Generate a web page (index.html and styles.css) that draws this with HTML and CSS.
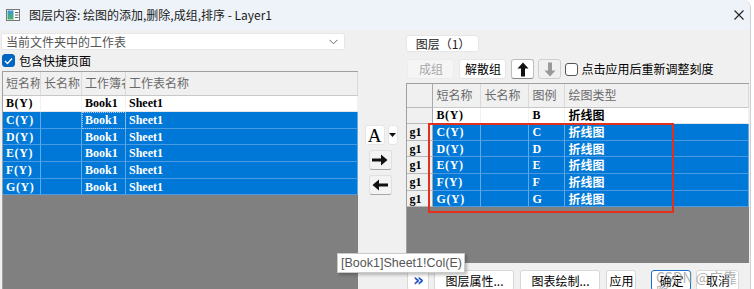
FILE: index.html
```html
<!DOCTYPE html>
<html lang="zh">
<head>
  <meta charset="UTF-8" />
  <title>图层内容</title>
  <link rel="stylesheet" href="styles.css">
</head>
<body>
  <div class="window">
    <div class="titlebar">
      <svg class="appicon" width="14" height="12" viewBox="0 0 14 12">
        <defs>
          <linearGradient id="g" x1="0" y1="0" x2="0" y2="1">
            <stop offset="0" stop-color="#3a9ad0"/>
            <stop offset="1" stop-color="#4caf6a"/>
          </linearGradient>
        </defs>
        <rect x="0.5" y="0.5" width="13" height="11" fill="#fff" stroke="#777"/>
        <rect x="1.5" y="1.5" width="6" height="9" fill="url(#g)"/>
        <line x1="9" y1="3.5" x2="12.5" y2="3.5" stroke="#666"/>
        <line x1="9" y1="6" x2="12.5" y2="6" stroke="#666"/>
        <line x1="9" y1="8.5" x2="12.5" y2="8.5" stroke="#666"/>
      </svg>
      <span class="title">图层内容: 绘图的添加,删除,成组,排序 - Layer1</span>
      <svg class="close" width="10" height="10" viewBox="0 0 10 10">
        <path d="M0.5 0.5 L9.5 9.5 M9.5 0.5 L0.5 9.5" stroke="#222" stroke-width="1.1"/>
      </svg>
    </div>

    <div class="main">
      <div class="left">
        <div class="combo">
          <span>当前文件夹中的工作表</span>
          <svg width="9" height="6" viewBox="0 0 9 6"><path d="M0.5 0.8 L4.5 4.8 L8.5 0.8" fill="none" stroke="#666" stroke-width="1"/></svg>
        </div>
        <div class="check-row">
          <span class="box checked">
            <svg width="9" height="8" viewBox="0 0 9 8"><path d="M1 4 L3.5 6.5 L8 1.5" fill="none" stroke="#fff" stroke-width="1.3"/></svg>
          </span>
          <span>包含快捷页面</span>
        </div>
        <div class="grid lgrid">
          <div class="lrow head">
            <div class="cell">短名称</div>
            <div class="cell">长名称</div>
            <div class="cell">工作簿名称</div>
            <div class="cell">工作表名称</div>
          </div>
          <div class="lrow plain">
            <div class="cell name">B(Y)</div><div class="cell"></div><div class="cell">Book1</div><div class="cell">Sheet1</div>
          </div>
          <div class="lrow sel">
            <div class="cell name">C(Y)</div><div class="cell"></div><div class="cell focus">Book1</div><div class="cell">Sheet1</div>
          </div>
          <div class="lrow sel">
            <div class="cell name">D(Y)</div><div class="cell"></div><div class="cell">Book1</div><div class="cell">Sheet1</div>
          </div>
          <div class="lrow sel">
            <div class="cell name">E(Y)</div><div class="cell"></div><div class="cell">Book1</div><div class="cell">Sheet1</div>
          </div>
          <div class="lrow sel">
            <div class="cell name">F(Y)</div><div class="cell"></div><div class="cell">Book1</div><div class="cell">Sheet1</div>
          </div>
          <div class="lrow sel">
            <div class="cell name">G(Y)</div><div class="cell"></div><div class="cell">Book1</div><div class="cell">Sheet1</div>
          </div>
        </div>
      </div>

      <div class="mid">
        <div class="a-row">
          <div class="btn a-btn">A</div>
          <div class="btn drop-btn">
            <svg width="7" height="4" viewBox="0 0 7 4"><path d="M0 0 H7 L3.5 4 Z" fill="#111"/></svg>
          </div>
        </div>
        <div class="btn arrow-btn">
          <svg width="16" height="12" viewBox="0 0 16 12"><path d="M0 4.5 H9 V0.5 L15.5 6 L9 11.5 V7.5 H0 Z" fill="#111"/></svg>
        </div>
        <div class="btn arrow-btn">
          <svg width="16" height="12" viewBox="0 0 16 12"><path d="M16 4.5 H7 V0.5 L0.5 6 L7 11.5 V7.5 H16 Z" fill="#111"/></svg>
        </div>
      </div>

      <div class="right">
        <div class="tab">图层（1）</div>
        <div class="toolbar">
          <div class="btn tbtn disabled">成组</div>
          <div class="btn tbtn">解散组</div>
          <div class="btn updown">
            <svg width="12" height="15" viewBox="0 0 12 15"><path d="M6 0.5 L11.5 6.5 H8 V14.5 H4 V6.5 H0.5 Z" fill="#111"/></svg>
          </div>
          <div class="btn updown off">
            <svg width="12" height="15" viewBox="0 0 12 15"><path d="M6 14.5 L11.5 8.5 H8 V0.5 H4 V8.5 H0.5 Z" fill="#9a9a9a"/></svg>
          </div>
          <span class="box"></span>
          <span class="check-text">点击应用后重新调整刻度</span>
        </div>
        <div class="grid rgrid">
          <div class="rrow head">
            <div class="cell rh"></div>
            <div class="cell">短名称</div>
            <div class="cell">长名称</div>
            <div class="cell">图例</div>
            <div class="cell">绘图类型</div>
          </div>
          <div class="rrow plain">
            <div class="cell rh"></div><div class="cell name">B(Y)</div><div class="cell"></div><div class="cell">B</div><div class="cell cjk">折线图</div>
          </div>
          <div class="rrow sel">
            <div class="cell rh">g1</div><div class="cell name">C(Y)</div><div class="cell"></div><div class="cell">C</div><div class="cell cjk">折线图</div>
          </div>
          <div class="rrow sel">
            <div class="cell rh">g1</div><div class="cell name">D(Y)</div><div class="cell"></div><div class="cell">D</div><div class="cell cjk">折线图</div>
          </div>
          <div class="rrow sel">
            <div class="cell rh">g1</div><div class="cell name">E(Y)</div><div class="cell"></div><div class="cell">E</div><div class="cell cjk">折线图</div>
          </div>
          <div class="rrow sel">
            <div class="cell rh">g1</div><div class="cell name">F(Y)</div><div class="cell"></div><div class="cell">F</div><div class="cell cjk">折线图</div>
          </div>
          <div class="rrow sel">
            <div class="cell rh">g1</div><div class="cell name">G(Y)</div><div class="cell"></div><div class="cell">G</div><div class="cell cjk">折线图</div>
          </div>
          <div class="mark"></div>
        </div>
        <div class="actions">
          <div class="btn abtn more">»</div>
          <div class="btn abtn wide">图层属性...</div>
          <div class="btn abtn wide">图表绘制...</div>
          <div class="btn abtn apply">应用</div>
          <div class="btn abtn ok">确定</div>
          <div class="btn abtn cancel">取消</div>
        </div>
      </div>
    </div>

    <div class="tooltip">[Book1]Sheet1!Col(E)</div>
    <div class="watermark">CSDN @广靠隆</div>
  </div>
</body>
</html>
```

FILE: styles.css
```css
* {
  box-sizing: border-box;
}
html, body {
  margin: 0;
}
body {
  width: 754px;
  height: 289px;
  overflow: hidden;
  background: #fff;
  font-family: "Noto Sans CJK SC", sans-serif;
  font-size: 12px;
  color: #000;
}
.window {
  position: relative;
  width: 751px;
  height: 289px;
  background: #f0f0f0;
  border-top-right-radius: 8px;
  border-right: 1px solid #cfcfcf;
  overflow: hidden;
}
.titlebar {
  height: 30px;
  background: #eef3f9;
  display: flex;
  align-items: center;
  padding-left: 6px;
}
.title {
  margin-left: 9px;
  color: #1a1a1a;
  line-height: 1;
}
.close {
  margin-left: auto;
  margin-right: 6px;
}
.main {
  display: flex;
  height: 259px;
}

/* left panel */
.left {
  width: 358px;
  padding: 3px 0 0 1px;
  display: flex;
  flex-direction: column;
}
.combo {
  width: 344px;
  height: 17px;
  background: #fff;
  border: 1px solid #e6e6e6;
  border-radius: 2px;
  display: flex;
  align-items: center;
  justify-content: space-between;
  padding: 0 6px 0 4px;
  color: #555;
  line-height: 1;
}
.check-row {
  margin: 3px 0 0 1px;
  height: 15px;
  display: flex;
  align-items: center;
  gap: 4px;
  line-height: 1;
}
.box {
  width: 13px;
  height: 13px;
  border: 1px solid #555;
  border-radius: 3px;
  background: #fff;
  display: flex;
  align-items: center;
  justify-content: center;
  flex: none;
}
.box.checked {
  background: #0067c0;
  border-color: #0067c0;
}

/* grids */
.grid {
  background: #808080;
  overflow: hidden;
}
.lgrid {
  margin: 3px 0 0 1px;
  flex: 1;
  border-top: 1px solid #a0a0a0;
  border-left: 1px solid #a0a0a0;
}
.lrow, .rrow {
  display: grid;
  height: 16.67px;
}
.lrow {
  grid-template-columns: 38px 41px 44px 1fr;
}
.rrow {
  grid-template-columns: 26px 48px 48px 36px 1fr;
}
.lrow.head, .rrow.head {
  height: 23.5px;
}
.cell {
  overflow: hidden;
  white-space: nowrap;
  padding-left: 3px;
  display: flex;
  align-items: center;
  font-family: "Liberation Serif", "Noto Sans CJK SC", serif;
  font-weight: bold;
  font-size: 12px;
  line-height: 1;
}
.cell.name {
  letter-spacing: 0.6px;
}
.cell.cjk {
  font-family: "Noto Sans CJK SC", sans-serif;
  font-size: 12px;
}
.head .cell {
  background: #f0f0f0;
  border-right: 1px solid #dadada;
  border-bottom: 1px solid #c8c8c8;
  font-family: "Noto Sans CJK SC", sans-serif;
  font-weight: normal;
  font-size: 12px;
  color: #6a6a6a;
}
.plain .cell {
  background: #fff;
  border-right: 1px solid #f2f2f2;
  border-bottom: 1px solid #e6e6e6;
}
.sel .cell {
  background: #0078d7;
  color: #fff;
  border-right: 1px solid #62a9ea;
  border-bottom: 1px solid #4b9be3;
}
.cell.focus {
  outline: 1px dotted #9cc8f0;
  outline-offset: -1px;
}
.rgrid {
  position: relative;
  margin-top: 4px;
  width: 343px;
  height: 180px;
  border-left: 1px solid #a0a0a0;
  border-top: 1px solid #a0a0a0;
}
.rgrid .rrow .cell.rh {
  background: #f0f0f0;
  color: #000;
  border-right: 1px solid #a8a8a8;
  border-bottom: 1px solid #b8b8b8;
  padding-left: 2px;
}
.mark {
  position: absolute;
  left: 21px;
  top: 39px;
  width: 246px;
  height: 90px;
  border: 2.5px solid #e3301c;
}

/* middle buttons */
.mid {
  width: 49px;
  padding-top: 95px;
  display: flex;
  flex-direction: column;
  align-items: flex-start;
}
.btn {
  background: #fff;
  border: 1px solid #d4d4d4;
  border-radius: 3px;
  display: flex;
  align-items: center;
  justify-content: center;
  line-height: 1;
}
.a-row {
  display: flex;
  gap: 3px;
  margin-left: 7px;
}
.a-btn {
  width: 20px;
  height: 20px;
  font-family: "Liberation Serif", serif;
  font-size: 19px;
  border-color: #e6e6e6;
}
.drop-btn {
  width: 10px;
  height: 20px;
  border-color: #e6e6e6;
}
.arrow-btn {
  width: 23px;
  height: 20px;
  margin: 5px 0 0 11px;
  background: #f3f3f3;
  border-color: #e0e0e0;
  border-bottom-color: #a8a8a8;
}

/* right panel */
.right {
  width: 344px;
  padding-top: 5px;
}
.tab {
  width: 73px;
  height: 17px;
  background: #fff;
  border: 1px solid #e6e6e6;
  border-radius: 3px;
  display: flex;
  align-items: center;
  justify-content: center;
  line-height: 1;
  color: #222;
}
.toolbar {
  margin-top: 7px;
  height: 20px;
  display: flex;
  align-items: center;
  padding-left: 1px;
}
.tbtn {
  height: 20px;
  width: 47px;
  margin-right: 5px;
  border-color: #e6e6e6;
}
.tbtn.disabled {
  background: #f5f5f5;
  color: #a9a9a9;
  border-color: #ececec;
}
.updown {
  width: 23px;
  height: 20px;
  margin-right: 4px;
  border-color: #bdbdbd;
  border-bottom-color: #888;
}
.updown.off {
  background: #f0f0f0;
  border-color: #cfcfcf;
}
.check-text {
  margin-left: 3px;
  line-height: 1;
}
.actions {
  margin-top: 7px;
  display: flex;
  padding-left: 1px;
}
.abtn {
  height: 21px;
  margin-right: 5px;
  border-color: #d8d8d8;
}
.more {
  width: 22px;
  color: #1a4fc8;
  font-size: 17px;
  font-weight: bold;
  font-family: "DejaVu Sans", sans-serif;
}
.wide {
  width: 80px;
  margin-right: 6px;
}
.apply {
  width: 30px;
  margin-right: 15px;
}
.ok {
  width: 40px;
  border: 1px solid #1a6fc8;
}
.cancel {
  width: 43px;
}

/* overlays */
.tooltip {
  position: absolute;
  left: 337px;
  top: 253px;
  width: 128px;
  height: 20px;
  background: #fff;
  border: 1px solid #cbcbcb;
  box-shadow: 2px 2px 3px rgba(0, 0, 0, 0.25);
  font-family: "Liberation Sans", sans-serif;
  font-size: 12.5px;
  color: #555;
  display: flex;
  align-items: center;
  padding-left: 3px;
}
.watermark {
  position: absolute;
  left: 656px;
  top: 270px;
  font-size: 14px;
  color: rgba(150, 150, 150, 0.75);
  line-height: 1;
}
```
